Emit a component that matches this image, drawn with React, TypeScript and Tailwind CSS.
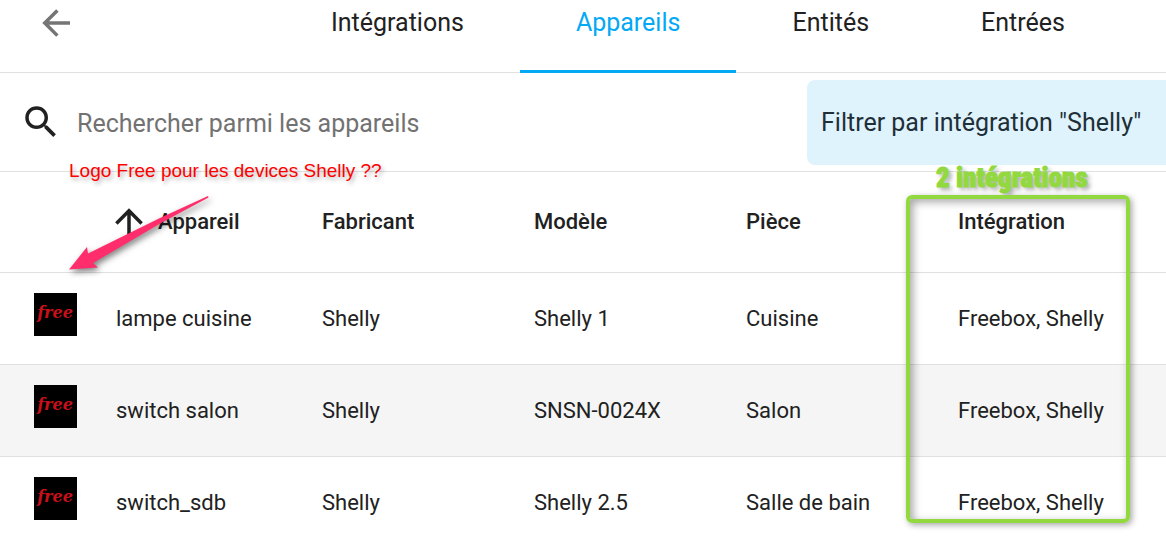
import { useState } from "react";

const TABS = ["Intégrations", "Appareils", "Entités", "Entrées"];

const DEVICES = [
  {
    name: "lampe cuisine",
    manufacturer: "Shelly",
    model: "Shelly 1",
    area: "Cuisine",
    integration: "Freebox, Shelly",
  },
  {
    name: "switch salon",
    manufacturer: "Shelly",
    model: "SNSN-0024X",
    area: "Salon",
    integration: "Freebox, Shelly",
  },
  {
    name: "switch_sdb",
    manufacturer: "Shelly",
    model: "Shelly 2.5",
    area: "Salle de bain",
    integration: "Freebox, Shelly",
  },
];

const ICONS = {
  arrowLeft:
    "M20,11V13H8L13.5,18.5L12.08,19.92L4.16,12L12.08,4.08L13.5,5.5L8,11H20Z",
  arrowUp:
    "M13,20H11V8L5.5,13.5L4.08,12.08L12,4.16L19.92,12.08L18.5,13.5L13,8V20Z",
  magnify:
    "M9.5,3A6.5,6.5 0 0,1 16,9.5C16,11.11 15.41,12.59 14.44,13.73L14.71,14H15.5L20.5,19L19,20.5L14,15.5V14.71L13.73,14.44C12.59,15.41 11.11,16 9.5,16A6.5,6.5 0 0,1 3,9.5A6.5,6.5 0 0,1 9.5,3M9.5,5C7,5 5,7 5,9.5C5,12 7,14 9.5,14C12,14 14,12 14,9.5C14,7 12,5 9.5,5Z",
};

const Icon = ({ path }: { path: string }) => (
  <svg
    viewBox="0 0 24 24"
    className="w-[42px] h-[42px] shrink-0 fill-current"
    aria-hidden="true"
  >
    <path d={path} />
  </svg>
);

const FreeLogo = () => (
  <svg viewBox="0 0 43 43" className="block w-[43px] h-[43px]">
    <rect width="43" height="43" fill="#000" />
    <text
      x="21"
      y="25"
      textAnchor="middle"
      fill="#c8101a"
      fontFamily="DejaVu Serif, serif"
      fontStyle="italic"
      fontWeight="bold"
      fontSize="16"
    >
      free
    </text>
  </svg>
);

const App = () => {
  const [activeTab, setActiveTab] = useState("Appareils");
  const [search, setSearch] = useState("");

  const devices = DEVICES.filter((d) =>
    d.name.toLowerCase().includes(search.toLowerCase())
  );

  return (
    <div className="relative h-screen overflow-hidden bg-white text-[#212121] font-['Roboto',sans-serif]">
      {/* Toolbar and tabs */}
      <header className="flex h-[73px] border-b border-[#e0e0e0]">
        <div className="w-[275px] shrink-0 pl-[35px] pt-0.5">
          <button aria-label="Retour" className="block text-[#757575]">
            <Icon path={ICONS.arrowLeft} />
          </button>
        </div>
        <nav className="flex">
          {TABS.map((tab) => (
            <button
              key={tab}
              onClick={() => setActiveTab(tab)}
              className={`h-[73px] px-14 pb-6 text-[25px] leading-8 border-b-3 whitespace-nowrap ${
                activeTab === tab
                  ? "text-[#03a9f4] border-[#03a9f4]"
                  : "border-transparent"
              }`}
            >
              {tab}
            </button>
          ))}
        </nav>
      </header>

      {/* Search and active filter */}
      <div className="flex h-[99px] items-center border-b border-[#e0e0e0]">
        <label className="flex flex-1 items-center gap-[15px] pl-5">
          <Icon path={ICONS.magnify} />
          <input
            type="text"
            value={search}
            onChange={(e) => setSearch(e.target.value)}
            placeholder="Rechercher parmi les appareils"
            aria-label="Rechercher parmi les appareils"
            className="flex-1 h-12 pt-0.5 text-[25px] outline-none placeholder:text-[#727272]"
          />
        </label>
        <div className="flex h-[85px] w-[359px] items-center rounded-l-lg bg-[#dff3fd] pl-3.5 pt-0.5 text-[25px] text-[#1f2f38] whitespace-nowrap">
          Filtrer par intégration "Shelly"
        </div>
      </div>

      {/* Devices */}
      <table className="w-full table-fixed text-left text-[22px]">
        <thead>
          <tr className="h-[100px] border-b border-[#e0e0e0]">
            <th className="w-[88px]" aria-label="Logo" />
            <th className="w-[206px] pl-7 font-medium">
              <button className="-ml-2 flex items-center gap-2">
                <Icon path={ICONS.arrowUp} />
                Appareil
              </button>
            </th>
            <th className="pl-7 font-medium">Fabricant</th>
            <th className="pl-7 font-medium">Modèle</th>
            <th className="pl-7 font-medium">Pièce</th>
            <th className="w-[236px] pl-7 font-medium">Intégration</th>
          </tr>
        </thead>
        <tbody>
          {devices.map((device) => (
            <tr
              key={device.name}
              className="h-[92px] border-b border-[#e0e0e0] even:bg-[#f5f5f5]"
            >
              <td className="pl-[34px] pt-5 align-top">
                <FreeLogo />
              </td>
              <td className="pl-7">{device.name}</td>
              <td className="pl-7">{device.manufacturer}</td>
              <td className="pl-7">{device.model}</td>
              <td className="pl-7">{device.area}</td>
              <td className="pl-7">{device.integration}</td>
            </tr>
          ))}
        </tbody>
      </table>

      {/* Annotations drawn over the page */}
      <p className="absolute left-[69px] top-[159px] text-[19px] leading-6 text-[#ff0000] font-['Liberation_Sans',Arial,sans-serif] [text-shadow:2px_3px_4px_rgba(0,0,0,0.3)] whitespace-nowrap">
        Logo Free pour les devices Shelly ??
      </p>
      <svg
        viewBox="0 0 150 84"
        className="pointer-events-none absolute left-[64px] top-[192px] w-[150px] h-[84px] overflow-visible drop-shadow-[2px_3px_3px_rgba(0,0,0,0.5)]"
        aria-hidden="true"
      >
        <path
          d="M5 77.5L23 55L24 61.5L96 26L144 4L144.500 5.500L98 30.500L29 71L34 75.500Z"
          fill="#ff2d6b"
        />
      </svg>
      <p className="absolute left-[936px] top-[162px] text-[27px] leading-8 font-black text-[#92d93f] font-['Impact','Roboto_Condensed','Roboto',sans-serif] [-webkit-text-stroke:1px_#92d93f] [text-shadow:3px_3px_4px_rgba(0,0,0,0.35)] whitespace-nowrap">
        2 intégrations
      </p>
      <div className="pointer-events-none absolute left-[906px] top-[195px] h-[328px] w-[224px] rounded-md border-4 border-[#92d93f] shadow-[2px_2px_6px_rgba(0,0,0,0.35),inset_3px_3px_8px_rgba(0,0,0,0.35)]" />
    </div>
  );
};

export default App;
